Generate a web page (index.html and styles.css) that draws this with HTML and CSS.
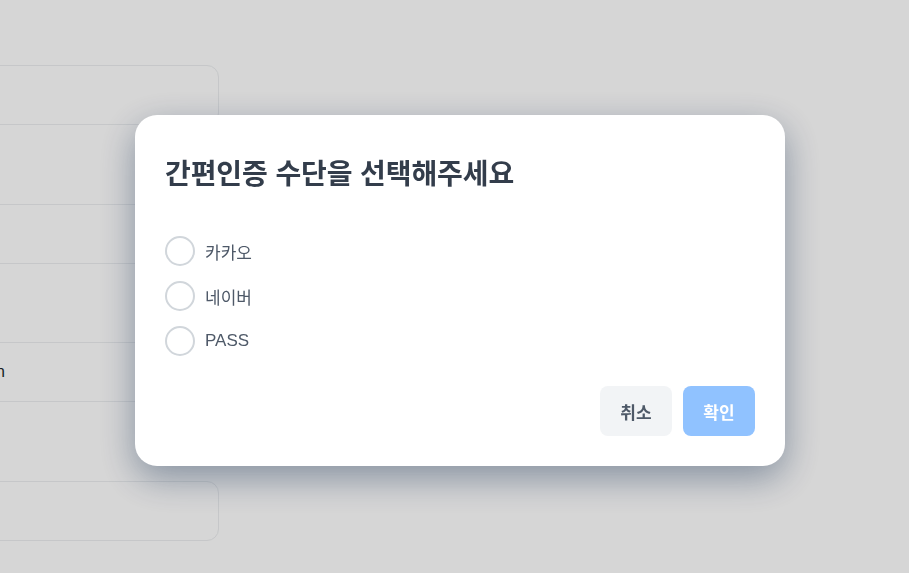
FILE: index.html
```html
<!DOCTYPE html>
<html lang="ko">
<head>
<meta charset="utf-8">
<title>간편인증</title>
<link rel="stylesheet" href="styles.css">
</head>
<body>
<div class="page">
  <div class="form">
    <div class="field field-top"></div>
    <div class="field"></div>
    <div class="field"><span class="value">hong.gildong@toss.design</span></div>
    <div class="field field-bottom"></div>
  </div>
</div>
<div class="overlay">
  <div class="modal" role="dialog" aria-labelledby="modal-title">
    <h2 class="modal-title" id="modal-title">간편인증 수단을 선택해주세요</h2>
    <ul class="options">
      <li class="option"><span class="radio"></span><span class="option-label">카카오</span></li>
      <li class="option"><span class="radio"></span><span class="option-label">네이버</span></li>
      <li class="option"><span class="radio"></span><span class="option-label">PASS</span></li>
    </ul>
    <div class="actions">
      <button class="btn btn-cancel" type="button">취소</button>
      <button class="btn btn-confirm" type="button">확인</button>
    </div>
  </div>
</div>
</body>
</html>
```
FILE: styles.css
```css
* { box-sizing: border-box; }
html, body { margin: 0; padding: 0; height: 100%; }
body {
  background: #ffffff;
  font-family: "Noto Sans CJK KR", "Noto Sans", sans-serif;
  overflow: hidden;
}
.page {
  padding-top: 65px;
}
.form {
  width: 420px;
  margin-left: -201px;
  display: flex;
  flex-direction: column;
  gap: 78.7px;
}
.field {
  height: 60px;
  border: 1px solid #eceef0;
  border-radius: 12px;
  display: flex;
  align-items: center;
  padding-left: 16px;
  font-family: "Liberation Sans", Arial, sans-serif;
  font-size: 16px;
  color: #191f28;
}
.value { white-space: nowrap; }

.overlay {
  position: fixed;
  inset: 0;
  background: rgba(0, 0, 0, 0.16);
  display: flex;
  align-items: center;
  justify-content: center;
  padding-left: 11px;
  padding-top: 8px;
}
.modal {
  width: 650px;
  background: #ffffff;
  border-radius: 22px;
  padding: 38px 30px 30px;
  box-shadow: 0 12px 36px rgba(2, 32, 71, 0.38);
}
.modal-title {
  margin: 0;
  font-size: 28px;
  font-weight: 700;
  line-height: 1.4;
  color: #333d4b;
  letter-spacing: -0.1px;
}
.options {
  list-style: none;
  margin: 44px 0 0;
  padding: 0;
  display: flex;
  flex-direction: column;
  gap: 15px;
}
.option {
  display: flex;
  align-items: center;
  gap: 10px;
  height: 30px;
}
.radio {
  width: 30px;
  height: 30px;
  border: 2px solid #d1d6db;
  border-radius: 50%;
  flex: none;
}
.option-label {
  font-family: "Liberation Sans", "Noto Sans CJK KR", sans-serif;
  font-size: 17px;
  color: #4e5968;
}
.actions {
  margin-top: 30px;
  display: flex;
  justify-content: flex-end;
  gap: 11px;
}
.btn {
  width: 72px;
  height: 50px;
  border: none;
  border-radius: 8px;
  font-family: "Noto Sans CJK KR", "Noto Sans", sans-serif;
  font-size: 17px;
  font-weight: 700;
  padding: 0;
}
.btn-cancel { background: #f2f4f6; color: #4e5968; }
.btn-confirm { background: #90c2ff; color: #ffffff; }
```
